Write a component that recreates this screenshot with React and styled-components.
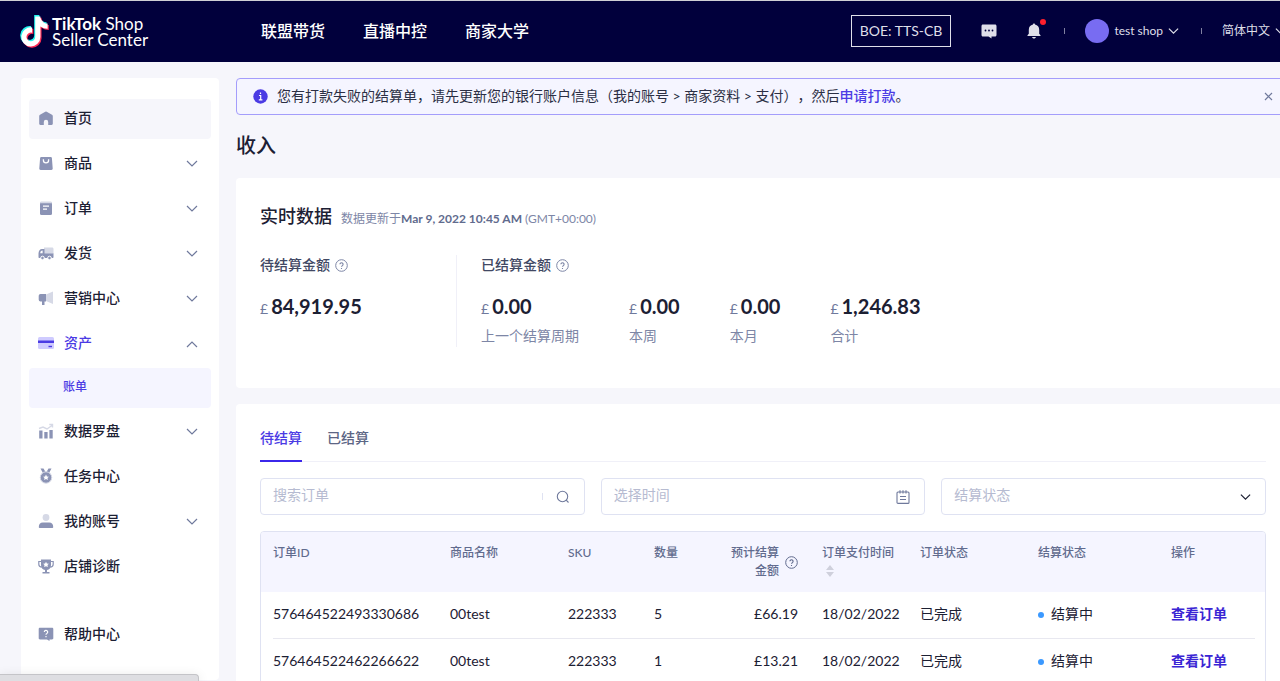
import React, { useState } from "react"
import styled, { createGlobalStyle } from "styled-components"

const GlobalStyle = createGlobalStyle`
  * {
    box-sizing: border-box;
  }

  body {
    margin: 0;
    background: #f6f6fb;
    color: #1c2033;
    font-family: Lato, "Noto Sans CJK SC", sans-serif;
    font-size: 14px;
    line-height: 20px;
    text-spacing-trim: space-all;
  }

  button, input, select {
    font: inherit;
    color: inherit;
  }

  button {
    border: 0;
    padding: 0;
    background: transparent;
    cursor: pointer;
  }

  a {
    color: inherit;
    text-decoration: none;
  }

  h1, h2, h3, p, ul {
    margin: 0;
    padding: 0;
  }

  svg {
    display: block;
    flex: none;
  }
`

const Viewport = styled.div`
  height: 100vh;
  overflow: hidden;
`

const Page = styled.div`
  min-width: 1306px;
`

const Header = styled.header`
  height: 62px;
  padding: 0 20px;
  border-top: 1px solid #cfd0d6;
  background: #01003c;
  color: #fff;
  display: flex;
  align-items: center;
`

const Logo = styled.a`
  width: 241px;
  display: flex;
  align-items: center;
  gap: 3px;
  font-size: 17px;
  line-height: 16px;
`

const LogoText = styled.span`
  display: flex;
  flex-direction: column;
`

const Nav = styled.nav`
  padding-bottom: 2px;
  display: flex;
  gap: 38px;
  font-size: 16px;
  font-weight: 500;
`

const HeaderTools = styled.div`
  margin-left: auto;
  padding-bottom: 2px;
  display: flex;
  align-items: center;
  color: #dfdfe9;
`

const EnvBadge = styled.span`
  height: 32px;
  padding: 0 8px;
  border: 1px solid #dfdfe9;
  line-height: 30px;
  margin-right: 30px;
`

const HeaderIcons = styled.div`
  display: flex;
  gap: 29px;
`

const IconButton = styled.button`
  color: ${(props) => props.color || "inherit"};
  position: relative;
  display: flex;
`

const RedDot = styled.span`
  position: absolute;
  top: -4px;
  right: -4px;
  width: 6px;
  height: 6px;
  border-radius: 50%;
  background: #ff1f2d;
`

const Separator = styled.span`
  width: 1px;
  height: 6px;
  margin: 0 20px 0 22px;
  background: #8080a0;
`

const HeaderMenu = styled.button`
  display: flex;
  align-items: center;
  gap: 5px;
  font-size: 12px;
`

const Avatar = styled.span`
  width: 24px;
  height: 24px;
  border-radius: 50%;
  background: #786cf2;
`

const Body = styled.div`
  padding: 16px 16px 0 21px;
  display: flex;
  align-items: flex-start;
  gap: 17px;
`

const Sidebar = styled.aside`
  width: 198px;
  flex: none;
  padding: 21px 8px 20px;
  border-radius: 4px;
  background: #fff;
`

const Menu = styled.ul`
  list-style: none;

  & + & {
    margin-top: 28px;
  }
`

const MenuEntry = styled.li`
  margin-bottom: ${(props) => (props.$open ? 4 : 5)}px;
`

const MenuItem = styled.a`
  height: 40px;
  padding: 0 12px 2px 8px;
  border-radius: 4px;
  display: flex;
  align-items: center;
  gap: 9px;
  font-weight: 500;
  color: ${(props) => (props.$open ? "#4b3be4" : "inherit")};
  background: ${(props) => (props.$active ? "#f6f6fb" : "transparent")};

  span {
    flex: 1;
  }
`

const SubItem = styled.a`
  height: 40px;
  margin-top: 4px;
  padding: 0 0 2px 34px;
  border-radius: 4px;
  display: flex;
  align-items: center;
  font-size: 12px;
  font-weight: 500;
  color: #4b3be4;
  background: #f5f5ff;
`

const Main = styled.main`
  flex: 1;
  min-width: 0;
`

const Alert = styled.div`
  height: 37px;
  padding: 0 16px;
  border: 1px solid #a49dfb;
  border-radius: 4px;
  background: #f5f5ff;
  display: flex;
  align-items: center;
  gap: 9px;

  p {
    flex: 1;
    padding-bottom: 2px;
    color: #2b2f44;
  }

  a {
    color: #4b3be4;
    font-weight: 500;
  }
`

const PageTitle = styled.h1`
  margin: 16px 0 19px;
  font-size: 20px;
  line-height: 28px;
  font-weight: 500;
`

const Card = styled.section`
  margin-bottom: 16px;
  padding: 24px;
  border-radius: 4px;
  background: #fff;
`

const CardHead = styled.div`
  display: flex;
  align-items: baseline;
  gap: 9px;

  h2 {
    font-size: 18px;
    line-height: 28px;
    font-weight: 500;
  }

  p {
    font-size: 12px;
    color: #7d86a6;
  }

  strong {
    color: #616b8e;
  }
`

const Stats = styled.div`
  margin: 25px 0 17px;
  display: flex;
`

const StatGroup = styled.div`
  min-width: 196px;
  height: 92px;

  & + & {
    padding-left: 24px;
    border-left: 1px solid #f0f0f8;
  }
`

const StatTitle = styled.h3`
  display: flex;
  align-items: center;
  gap: 5px;
  font-size: 14px;
  line-height: 20px;
  font-weight: 500;
  color: #414863;

  svg {
    color: #7d86a6;
  }
`

const StatRow = styled.div`
  margin-top: 17px;
  display: flex;
  gap: 50px;
`

const Amount = styled.p`
  display: flex;
  align-items: baseline;
  gap: 3px;
  color: #6f799c;
  line-height: 28px;

  strong {
    font-size: 20px;
    color: #1c2033;
  }
`

const StatLabel = styled.p`
  margin-top: 3px;
  color: #7d86a6;
`

const Tabs = styled.div`
  display: flex;
  gap: 25px;
  border-bottom: 1px solid #f0f0f8;
`

const Tab = styled.button`
  padding: 0 0 12px;
  margin-bottom: -1px;
  border-bottom: 2px solid ${(props) => (props.$active ? "#3b27ea" : "transparent")};
  color: ${(props) => (props.$active ? "#4b3be4" : "#5d6685")};
  font-weight: 500;
`

const Filters = styled.div`
  margin: 16px 0;
  display: grid;
  grid-template-columns: repeat(3, 1fr);
  gap: 16px;
`

const Field = styled.label`
  height: 37px;
  min-width: 0;
  padding: 0 14px 0 12px;
  border: 1px solid #dfe2f2;
  border-radius: 4px;
  display: flex;
  align-items: center;
  color: #6f799c;

  input, select {
    flex: 1;
    min-width: 0;
    height: 20px;
    padding: 0;
    margin-bottom: 4px;
    border: 0;
    outline: 0;
    background: transparent;
    appearance: none;
  }

  select, input::placeholder {
    color: #b6bbd1;
    opacity: 1;
  }
`

const FieldLine = styled.span`
  width: 1px;
  height: 7px;
  margin-right: 13px;
  background: #dfe2f2;
`

const TableBox = styled.div`
  border: 1px solid #dfe2f2;
  border-radius: 4px;
  overflow: hidden;
`

const Table = styled.table`
  width: 100%;
  table-layout: fixed;
  border-collapse: collapse;
  text-align: left;

  thead {
    background: #f5f5ff;
  }

  th {
    height: 60px;
    padding: 12px 12px 10px;
    vertical-align: top;
    font-size: 12px;
    line-height: 18px;
    font-weight: 500;
    color: #616b8e;
    white-space: nowrap;
  }

  td {
    height: 47px;
    padding: 0 12px 3px;
    white-space: nowrap;
  }

  tbody tr {
    background: linear-gradient(#e8e8f0, #e8e8f0) 12px 100% / calc(100% - 22px) 1px no-repeat;
  }
`

const EstimateHead = styled.div`
  display: flex;
  align-items: center;
  justify-content: flex-end;
  gap: 6px;
  text-align: right;
`

const SortButton = styled.button`
  display: block;
  margin-top: 2px;
  color: #cfd0dc;
`

const NumberCell = styled.td`
  text-align: right;
`

const Status = styled.span`
  display: flex;
  align-items: center;
  gap: 7px;

  &::before {
    content: "";
    width: 6px;
    height: 6px;
    margin-top: 2px;
    border-radius: 50%;
    background: #3b99ff;
  }
`

const ActionLink = styled.a`
  color: #3a25d4;
  font-weight: 700;
`

const StatusBubble = styled.div`
  position: fixed;
  left: 0;
  bottom: 0;
  width: 199px;
  height: 7px;
  border: 1px solid #c4c4c8;
  border-width: 1px 1px 0 0;
  border-radius: 0 4px 0 0;
  background: #dedee2;
  box-shadow: 0 2px 12px rgba(0, 0, 0, 0.12);
`

const notePath =
  "M448,209.91a210.06,210.06,0,0,1-122.77-39.25V349.38A162.55,162.55,0,1,1,185,188.31V278.2a74.62,74.62,0,1,0,52.23,71.18V0l88,0a121.18,121.18,0,0,0,1.86,22.17h0A122.18,122.18,0,0,0,381,102.39a121.43,121.43,0,0,0,67,20.14Z"

const LogoMark = () => (
  <svg width="29" height="33" viewBox="0 0 494 562">
    <path d={notePath} fill="#25f4ee" transform="translate(4 0)" />
    <path d={notePath} fill="#fe2c55" transform="translate(42 46)" />
    <path d={notePath} fill="#fff" transform="translate(22 24)" />
  </svg>
)

const Chevron = ({ size = 11 }) => (
  <svg width={size} height={size} viewBox="0 0 12 12" fill="none" stroke="currentColor" strokeWidth="1.3">
    <path d="M1 4l5 5 5-5" />
  </svg>
)

const HelpIcon = () => (
  <svg width="13" height="13" viewBox="0 0 13 13" fill="none" stroke="currentColor">
    <circle cx="6.5" cy="6.5" r="5.8" />
    <path d="M4.9 5.3a1.6 1.6 0 1 1 2.4 1.4c-.6.3-.8.5-.8 1M6.5 8.9v1" strokeWidth="1.1" />
  </svg>
)

const main = "#8b93b5"
const pale = "#d6d9e6"

const menuIcons = {
  home: (
    <path
      fill={main}
      d="M8.3 2.7 3 5.8c-.5.3-.8.8-.8 1.400v7.500c0 .7.5 1.200 1.200 1.200h3.400v-2.900a2.200 2.200 0 0 1 4.400 0v2.900h3.400c.7 0 1.200-.5 1.200-1.200V7.200c0-.6-.3-1.100-.8-1.400L9.700 2.700a1.400 1.400 0 0 0-1.400 0z"
    />
  ),
  bag: (
    <>
      <path fill={main} d="M4.2 3h9.600c.6 0 1 .4 1.100 1l.8 10.600c.1.800-.5 1.400-1.300 1.400H3.600c-.8 0-1.400-.6-1.300-1.400L3.100 4c.1-.6.5-1 1.100-1z" />
      <path d="M6.4 5.2v1a2.600 2.600 0 0 0 5.200 0v-1" fill="none" stroke="#fff" strokeWidth="1.3" />
    </>
  ),
  order: (
    <>
      <rect x="3" y="3" width="12" height="13" rx="1.5" fill={main} />
      <path d="M3 4.2C3 3.2 3.600 2.600 4.500 2.600h9c.9 0 1.500.6 1.500 1.600z" fill={pale} />
      <path d="M6 7.200h6M6 10.200h4" stroke="#fff" strokeWidth="1.3" />
    </>
  ),
  truck: (
    <>
      <path d="M7 3.500h8c1 0 1.500.6 1.500 1.500v5H7z" fill={pale} />
      <path fill={main} d="M5 5h2.500v4.500h9V13c0 .6-.4 1-1 1h-13c-.6 0-1-.4-1-1V9.500C1.500 7 3 5 5 5z" />
      <path d="M3.200 9.300c0-1.700.8-2.800 2.400-2.800v2.800z" fill="#fff" />
      <circle cx="5.5" cy="14" r="1.8" fill={main} stroke="#fff" />
      <circle cx="12.5" cy="14" r="1.8" fill={main} stroke="#fff" />
    </>
  ),
  horn: (
    <>
      <path d="M9 5.500 16 2.500V15l-7-3z" fill={pale} />
      <path fill={main} d="M3.500 5H9v7.500H7.500V16H5v-3.500H3.500a1.800 1.800 0 0 1-1.800-1.800V6.800A1.800 1.800 0 0 1 3.500 5z" />
    </>
  ),
  card: (
    <>
      <rect x="1" y="3" width="16" height="12" rx="1.5" fill="#cfcbff" />
      <path d="M1 6.500h16V9H1z" fill="#4b3be4" />
      <path d="M11.500 12.500H15" stroke="#4b3be4" strokeWidth="1.4" />
    </>
  ),
  chart: (
    <>
      <path d="M2.200 8.500h3.300v8H2.200zM7.300 10h3.300v6.500H7.300zM12.400 8h3.300v8.500h-3.300z" fill={main} />
      <path d="M2 6.500 6 5l4 2 5-3.500M12.300 2.500h3.200v3" fill="none" stroke={pale} strokeWidth="1.4" />
    </>
  ),
  medal: (
    <>
      <path d="M3.500 1.500h3L8.500 5l-2.300 1.500zM14.500 1.500h-3L9.500 5l2.300 1.500z" fill={main} />
      <circle cx="9" cy="10.5" r="5.7" fill={main} stroke={pale} />
      <path fill="#fff" d="m9 7.500.9 1.900 2 .3-1.400 1.400.3 2-1.800-1-1.800 1 .3-2-1.400-1.400 2-.3z" />
    </>
  ),
  user: (
    <>
      <circle cx="9" cy="5.5" r="3.4" fill={pale} />
      <path fill={main} d="M1.800 15.200c0-3.200 1.400-4.700 4-4.700h6.400c2.600 0 4 1.500 4 4.700 0 .5-.3.8-.8.8H2.600c-.5 0-.8-.3-.8-.8z" />
    </>
  ),
  trophy: (
    <>
      <path
        d="M4 4.500H1.800v2.700C1.800 9.300 3 10 5 10M14 4.500h2.200v2.700c0 2.100-1.200 2.800-3.200 2.800"
        fill="none"
        stroke={main}
        strokeWidth="1.2"
      />
      <path fill={main} d="M4 2.500h10V8c0 3-1.700 4.500-4 4.900V15h2.500v1.500h-7V15H8v-2.100C5.700 12.500 4 11 4 8z" />
      <path fill="#fff" d="m9 4.700.9 1.800 2 .3-1.400 1.300.3 2L9 9.200l-1.800.9.3-2-1.400-1.300 2-.3z" />
    </>
  ),
  help: (
    <>
      <path
        fill={main}
        d="M3 2.800h12c.8 0 1.300.5 1.300 1.200v9.300c0 .7-.5 1.200-1.300 1.200h-2.500V16L10 14.500H3c-.8 0-1.300-.5-1.300-1.200V4c0-.7.5-1.200 1.300-1.200z"
      />
      <path d="M7.300 7a1.700 1.700 0 1 1 2.500 1.500c-.6.3-.8.6-.8 1.200M9 11v1.300" fill="none" stroke="#fff" strokeWidth="1.2" />
    </>
  ),
}

const menu = [
  { icon: "home", label: "首页", active: true },
  { icon: "bag", label: "商品", more: true },
  { icon: "order", label: "订单", more: true },
  { icon: "truck", label: "发货", more: true },
  { icon: "horn", label: "营销中心", more: true },
  { icon: "card", label: "资产", more: true, children: ["账单"] },
  { icon: "chart", label: "数据罗盘", more: true },
  { icon: "medal", label: "任务中心" },
  { icon: "user", label: "我的账号", more: true },
  { icon: "trophy", label: "店铺诊断" },
]

const settled = [
  { label: "上一个结算周期", amount: "0.00" },
  { label: "本周", amount: "0.00" },
  { label: "本月", amount: "0.00" },
  { label: "合计", amount: "1,246.83" },
]

const columns = [177, 118, 86, 77, 91, 98, 118, 133, 106]

const orders = [
  { id: "576464522493330686", name: "00test", sku: "222333", count: 5, amount: "£66.19", date: "18/02/2022" },
  { id: "576464522462266622", name: "00test", sku: "222333", count: 1, amount: "£13.21", date: "18/02/2022" },
]

const SideEntry = ({ item }) => {
  const open = !!item.children
  return (
    <MenuEntry $open={open}>
      <MenuItem href="#" $active={item.active} $open={open}>
        <svg width="18" height="18" viewBox="0 0 18 18">
          {menuIcons[item.icon]}
        </svg>
        <span>{item.label}</span>
        {item.more && (
          <svg width="14" height="12" viewBox="0 0 14 12" fill="none" stroke="#6f799c" strokeWidth="1.2">
            <path d={open ? "M2 10l5-5 5 5" : "M2 4l5 5 5-5"} />
          </svg>
        )}
      </MenuItem>
      {open &&
        item.children.map((label) => (
          <SubItem href="#" key={label}>
            {label}
          </SubItem>
        ))}
    </MenuEntry>
  )
}

const TopBar = () => (
  <Header>
    <Logo href="#">
      <LogoMark />
      <LogoText>
        <span>
          <b>TikTok</b> Shop
        </span>
        <span>Seller Center</span>
      </LogoText>
    </Logo>
    <Nav>
      <a href="#">联盟带货</a>
      <a href="#">直播中控</a>
      <a href="#">商家大学</a>
    </Nav>
    <HeaderTools>
      <EnvBadge>BOE: TTS-CB</EnvBadge>
      <HeaderIcons>
        <IconButton aria-label="消息">
          <svg width="16" height="16" viewBox="0 0 16 16">
            <path
              fill="currentColor"
              d="M2 1.500h12c.9 0 1.500.6 1.500 1.500v9c0 .9-.6 1.500-1.500 1.500h-3.500v2L7.500 13.500H2c-.9 0-1.500-.6-1.500-1.500V3c0-.9.6-1.500 1.500-1.500z"
            />
            <g fill="#01003c">
              <circle cx="4.5" cy="7.5" r=".9" />
              <circle cx="8" cy="7.5" r=".9" />
              <circle cx="11.5" cy="7.5" r=".9" />
            </g>
          </svg>
        </IconButton>
        <IconButton aria-label="通知">
          <svg width="16" height="16" viewBox="0 0 16 16">
            <path
              fill="currentColor"
              d="M8 .5c.7 0 1 .4 1 1 2.600.5 4.200 2.500 4.200 5.200v4l1.300 1.500v.8h-13v-.8l1.300-1.500v-4c0-2.700 1.600-4.700 4.200-5.200 0-.6.3-1 1-1zM6 14h4c-.2.900-1 1.500-2 1.500s-1.800-.6-2-1.500z"
            />
          </svg>
          <RedDot />
        </IconButton>
      </HeaderIcons>
      <Separator />
      <HeaderMenu>
        <Avatar />
        test shop
        <Chevron />
      </HeaderMenu>
      <Separator />
      <HeaderMenu>
        简体中文
        <Chevron />
      </HeaderMenu>
    </HeaderTools>
  </Header>
)

const Income = () => (
  <Card>
    <CardHead>
      <h2>实时数据</h2>
      <p>
        数据更新于<strong>Mar 9, 2022 10:45 AM</strong> (GMT+00:00)
      </p>
    </CardHead>
    <Stats>
      <StatGroup>
        <StatTitle>
          待结算金额
          <HelpIcon />
        </StatTitle>
        <StatRow>
          <Amount>
            £<strong>84,919.95</strong>
          </Amount>
        </StatRow>
      </StatGroup>
      <StatGroup>
        <StatTitle>
          已结算金额
          <HelpIcon />
        </StatTitle>
        <StatRow>
          {settled.map((stat) => (
            <div key={stat.label}>
              <Amount>
                £<strong>{stat.amount}</strong>
              </Amount>
              <StatLabel>{stat.label}</StatLabel>
            </div>
          ))}
        </StatRow>
      </StatGroup>
    </Stats>
  </Card>
)

const Bills = () => {
  const [tab, setTab] = useState("待结算")

  return (
    <Card>
      <Tabs role="tablist">
        {["待结算", "已结算"].map((name) => (
          <Tab key={name} role="tab" aria-selected={tab === name} $active={tab === name} onClick={() => setTab(name)}>
            {name}
          </Tab>
        ))}
      </Tabs>
      <Filters>
        <Field>
          <input type="text" aria-label="搜索订单" placeholder="搜索订单" />
          <FieldLine />
          <svg width="14" height="14" viewBox="0 0 14 14" fill="none" stroke="currentColor" strokeWidth="1.1">
            <circle cx="6.5" cy="6.5" r="5.2" />
            <path d="M10.200 10.200 12.500 12.500" />
          </svg>
        </Field>
        <Field>
          <input type="text" aria-label="选择时间" placeholder="选择时间" />
          <svg width="14" height="14" viewBox="0 0 14 14" fill="none" stroke="currentColor" strokeWidth="1.1">
            <rect x="1" y="2" width="12" height="11.4" rx="1" />
            <path d="M4 .3v3.200M7 .3v3.200M10 .3v3.200M4 6.500h6M4 9.500h6" />
          </svg>
        </Field>
        <Field>
          <select aria-label="结算状态" defaultValue="">
            <option value="">结算状态</option>
            <option value="settling">结算中</option>
          </select>
          <IconButton as="span" color="#1c2033">
            <Chevron />
          </IconButton>
        </Field>
      </Filters>
      <TableBox>
        <Table>
          <colgroup>
            {columns.map((width, i) => (
              <col key={i} width={width} />
            ))}
          </colgroup>
          <thead>
            <tr>
              <th>订单ID</th>
              <th>商品名称</th>
              <th>SKU</th>
              <th>数量</th>
              <th>
                <EstimateHead>
                  <span>
                    预计结算
                    <br />
                    金额
                  </span>
                  <HelpIcon />
                </EstimateHead>
              </th>
              <th>
                订单支付时间
                <SortButton aria-label="排序">
                  <svg width="16" height="14" viewBox="0 0 16 14" fill="currentColor">
                    <path d="M8 1l4 5H4zM8 13l4-5H4z" />
                  </svg>
                </SortButton>
              </th>
              <th>订单状态</th>
              <th>结算状态</th>
              <th>操作</th>
            </tr>
          </thead>
          <tbody>
            {orders.map((order) => (
              <tr key={order.id}>
                <td>{order.id}</td>
                <td>{order.name}</td>
                <td>{order.sku}</td>
                <td>{order.count}</td>
                <NumberCell>{order.amount}</NumberCell>
                <td>{order.date}</td>
                <td>已完成</td>
                <td>
                  <Status>结算中</Status>
                </td>
                <td>
                  <ActionLink href="#">查看订单</ActionLink>
                </td>
              </tr>
            ))}
          </tbody>
        </Table>
      </TableBox>
    </Card>
  )
}

const App = () => {
  return (
    <Viewport>
      <GlobalStyle />
      <Page>
        <TopBar />
        <Body>
          <Sidebar>
            <Menu>
              {menu.map((item) => (
                <SideEntry key={item.label} item={item} />
              ))}
            </Menu>
            <Menu>
              <SideEntry item={{ icon: "help", label: "帮助中心" }} />
            </Menu>
          </Sidebar>
          <Main>
            <Alert>
              <svg width="15" height="15" viewBox="0 0 15 15">
                <circle cx="7.5" cy="7.5" r="7.2" fill="#4b3be4" />
                <path d="M6 6.500h1.700v4M5.800 10.800h3.600M7.500 3.500v1.400" fill="none" stroke="#fff" strokeWidth="1.2" />
              </svg>
              <p>
                您有打款失败的结算单，请先更新您的银行账户信息（我的账号 &gt; 商家资料 &gt; 支付），然后
                <a href="#">申请打款</a>。
              </p>
              <IconButton aria-label="关闭" color="#6f799c">
                <svg width="9" height="9" viewBox="0 0 9 9" stroke="currentColor" strokeWidth="1.2">
                  <path d="M1 1l7 7M8 1 1 8" />
                </svg>
              </IconButton>
            </Alert>
            <PageTitle>收入</PageTitle>
            <Income />
            <Bills />
          </Main>
        </Body>
      </Page>
      <StatusBubble />
    </Viewport>
  )
}

export default App
